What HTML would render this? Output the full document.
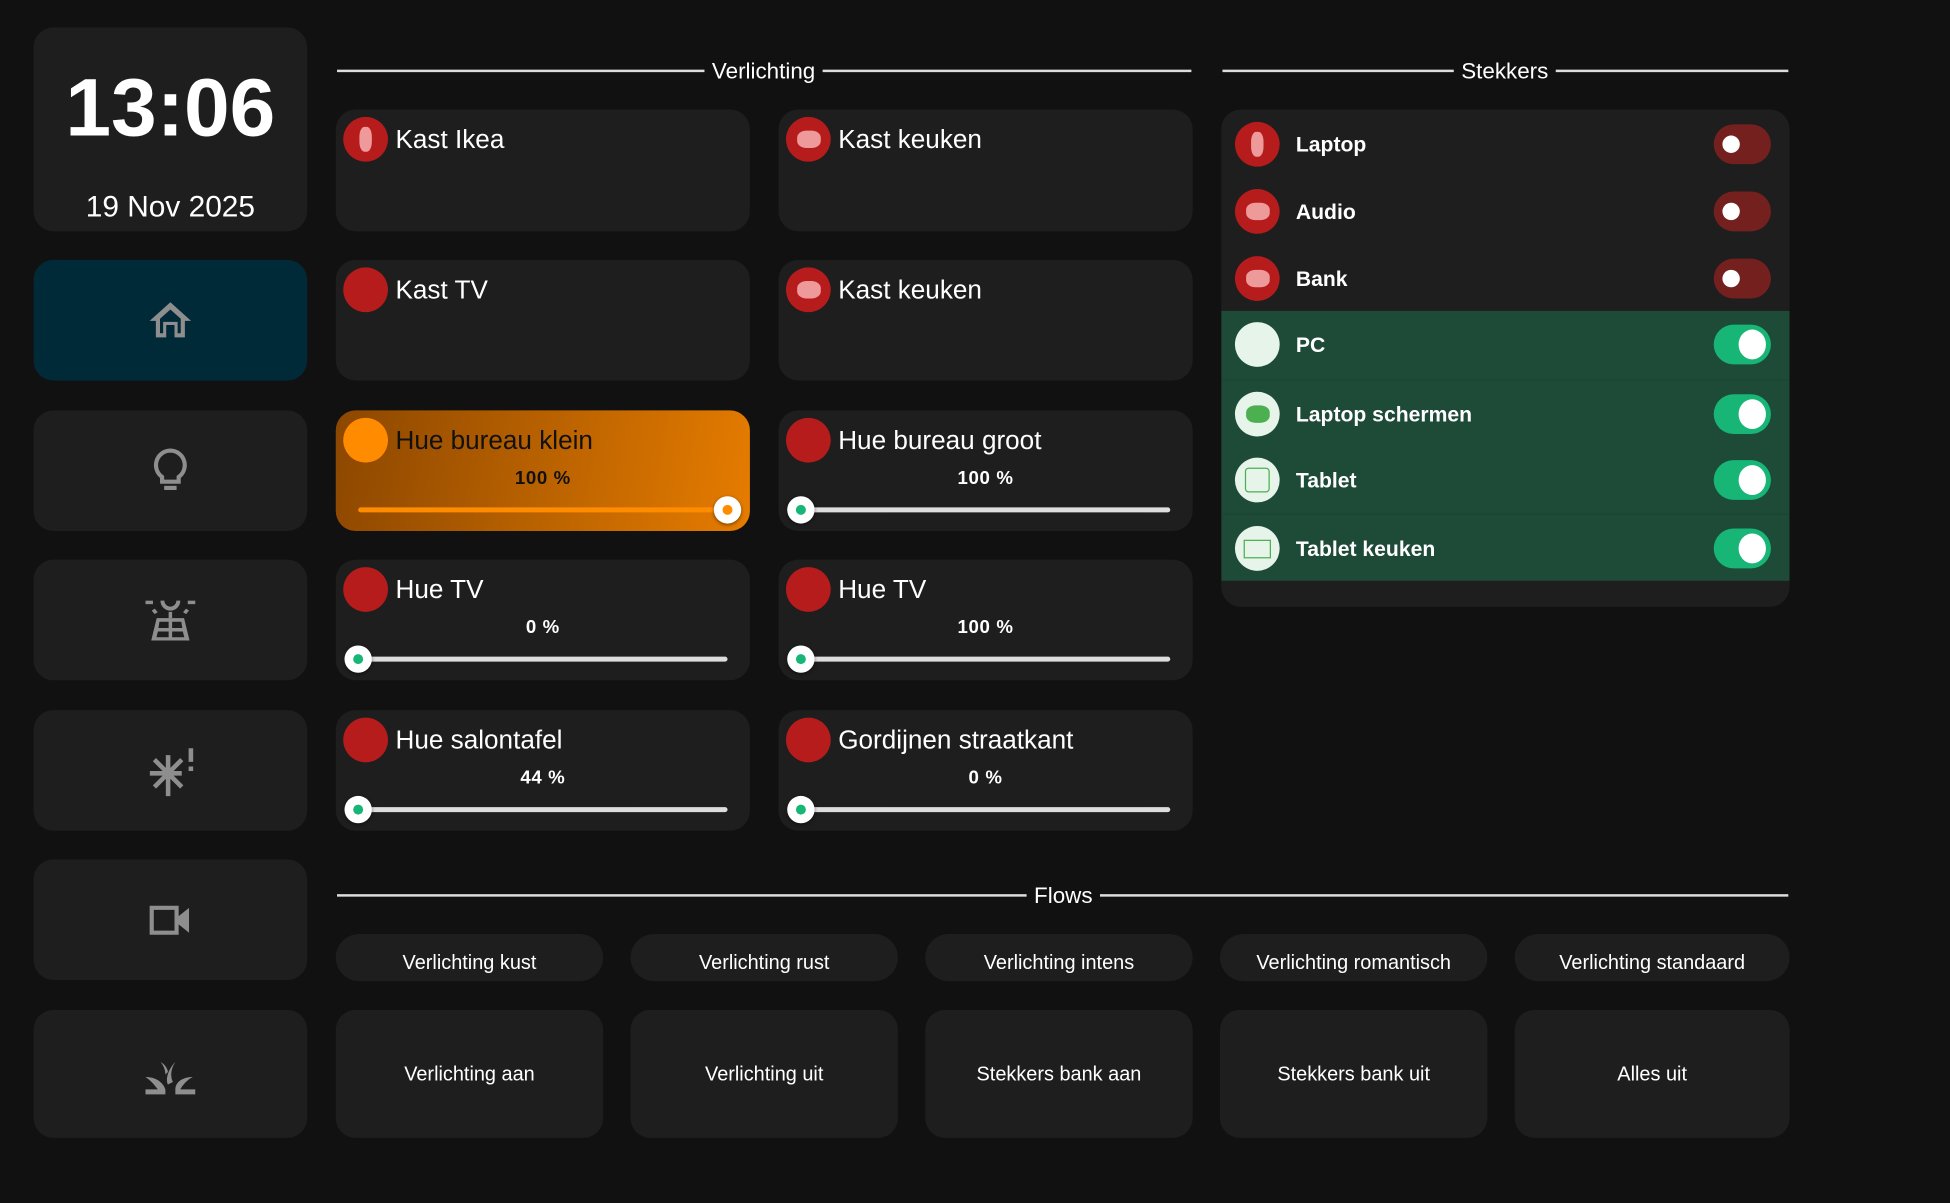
<!DOCTYPE html>
<html><head><meta charset="utf-8"><style>
*{box-sizing:border-box;margin:0;padding:0}
html,body{width:1950px;height:1203px;background:#111;overflow:hidden}
#w{position:absolute;left:0;top:0;width:1568px;height:967px;transform:scale(1.243622);transform-origin:0 0;font-family:"Liberation Sans",Roboto,sans-serif;color:#fff}
.c{position:absolute;background:#1e1e1e;border-radius:16px}
.nav{left:27px;width:220px;display:flex;align-items:center;justify-content:center}
.hdr{position:absolute;height:2px;background:#ddd}
.ht{position:absolute;font-size:18px;transform:translateX(-50%);background:#111;padding:0 6px;top:47px}
.ic{position:absolute;width:36px;height:36px;border-radius:50%;background:#b71c1c}
.lt{position:absolute;left:48px;top:13px;font-size:21px}
.pc{position:absolute;width:100%;text-align:center;top:46px;font-size:15px;font-weight:bold;letter-spacing:.5px}
.tr{position:absolute;left:18px;right:18px;top:78px;height:4px;background:#ddd;border-radius:2px}
.th{position:absolute;width:22px;height:22px;border-radius:50%;background:#fff;top:69px;box-shadow:0 1px 3px rgba(0,0,0,.5)}
.th::after{content:"";position:absolute;left:7px;top:7px;width:8px;height:8px;border-radius:50%;background:#17b576}
.th.o::after{background:#ff8c00}
.pk{position:absolute;background:#ef9a9a;border-radius:40%}
.row{position:absolute;left:0;right:0;height:54px}
.row .i{position:absolute;left:11px;top:9px;width:36px;height:36px;border-radius:50%;background:#b71c1c}
.row .n{position:absolute;left:60px;top:18px;font-size:17px;font-weight:bold}
.tg{position:absolute;left:396px;top:11px;width:46px;height:32px;border-radius:16px;background:#74201f}
.tg::after{content:"";position:absolute;left:7px;top:9px;width:14px;height:14px;border-radius:50%;background:#fff}
.on .i{background:#e6f4ea}
.on .tg{background:#17b576}
.on .tg::after{left:20px;top:4px;width:22px;height:24px;border-radius:50%}
.pill{position:absolute;top:751px;height:38px;border-radius:19px;background:#1e1e1e;display:flex;align-items:center;justify-content:center;font-size:16px;padding-top:9px}
.big{position:absolute;top:812px;height:103px;border-radius:16px;background:#1e1e1e;display:flex;align-items:center;justify-content:center;font-size:16px;padding-top:3px}
</style></head><body><div id="w">
<div class="c nav" style="top:22px;height:164px;flex-direction:column">
<div style="font-size:66px;font-weight:bold;margin-top:20px">13:06</div>
<div style="font-size:24px;margin-top:29px">19 Nov 2025</div></div>
<div class="c nav" style="top:209px;height:97px;background:#012a39"><svg width="40" height="40" viewBox="0 0 24 24"><path d="M12 3L2 12h3v8h5v-6h4v6h5v-8h3z M7 11v7h1.5v-5.5h7V18H17v-7l-5-4.5z" fill="#8e8e8e" fill-rule="evenodd"/></svg></div>
<div class="c nav" style="top:330px;height:97px"><svg width="40" height="40" viewBox="0 0 24 24"><path d="M12 2a7 7 0 0 0-4 12.7V17h8v-2.3A7 7 0 0 0 12 2z" fill="none" stroke="#8e8e8e" stroke-width="2"/><rect x="9" y="19" width="6" height="2" fill="#8e8e8e"/></svg></div>
<div class="c nav" style="top:450px;height:97px"><svg width="48" height="48" viewBox="0 0 24 24" fill="#8e8e8e"><rect x="2" y="4" width="3" height="1.4"/><rect x="19" y="4" width="3" height="1.4"/><path d="M8 4a4 4 0 0 0 8 0h-1.6a2.4 2.4 0 0 1-4.8 0z"/><rect x="11.3" y="8.5" width="1.4" height="2.5"/><path d="M4.5 8l1.2-.8 1.2 1.4-1.2.8zM19.5 8l-1.2-.8-1.2 1.4 1.2.8z"/><path d="M6.5 11h11l2.2 9H4.3zM7.6 12.5l-.4 2.5h4.1v-2.5zM12.7 12.5V15h4.1l-.4-2.5zM7 16.4l-.6 2.3h4.9v-2.3zM12.7 16.4v2.3h4.9l-.6-2.3z" fill-rule="evenodd"/></svg></div>
<div class="c nav" style="top:571px;height:97px"><svg width="44" height="44" viewBox="0 0 24 24" fill="none" stroke="#8e8e8e" stroke-width="2"><path d="M11 5v18M3 13h14M5 7l12 12M17 7L5 19"/><path d="M21 2v6M21 10v2" stroke-width="2"/></svg></div>
<div class="c nav" style="top:691px;height:97px"><svg width="40" height="40" viewBox="0 0 24 24" fill="#8e8e8e"><path d="M2 5h14v5l5-4v12l-5-4v5H2zM4 7v10h10V7z" fill-rule="evenodd"/></svg></div>
<div class="c nav" style="top:812px;height:103px"><svg width="48" height="48" viewBox="0 0 24 24" fill="#8e8e8e"><path d="M2 20h8v-2C9 15 6 13 2 13c3 2 4 4 5 5H2zM14 20h8v-2h-6c1-2 3-4 5-5-4 0-7 2-7 5zM11 16c-1-2 0-6 3-9-2 3-2 6-1 8zM10 12c0-2-1-4-2-5 2 1 3 3 3 4z"/></svg></div>

<div class="hdr" style="left:271px;width:687px;top:56px"></div><div class="ht" style="left:614px">Verlichting</div>
<div class="hdr" style="left:983px;width:455px;top:56px"></div><div class="ht" style="left:1210px">Stekkers</div>
<div class="hdr" style="left:271px;width:1167px;top:719px"></div><div class="ht" style="left:855px;top:710px">Flows</div>

<div class="c" style="left:270px;top:88px;width:333px;height:98px"><div class="ic" style="left:6px;top:6px"><div class="pk" style="left:13px;top:8px;width:10px;height:20px"></div></div><div class="lt">Kast Ikea</div></div>
<div class="c" style="left:626px;top:88px;width:333px;height:98px"><div class="ic" style="left:6px;top:6px"><div class="pk" style="left:9px;top:11px;width:19px;height:14px"></div></div><div class="lt">Kast keuken</div></div>
<div class="c" style="left:270px;top:209px;width:333px;height:97px"><div class="ic" style="left:6px;top:6px"></div><div class="lt">Kast TV</div></div>
<div class="c" style="left:626px;top:209px;width:333px;height:97px"><div class="ic" style="left:6px;top:6px"><div class="pk" style="left:9px;top:11px;width:19px;height:14px"></div></div><div class="lt">Kast keuken</div></div>

<div class="c" style="left:270px;top:330px;width:333px;height:97px;background:linear-gradient(100deg,#8c4700,#e67c00)"><div class="ic" style="left:6px;top:6px;background:#ff8c00"></div><div class="lt" style="color:#111">Hue bureau klein</div><div class="pc" style="color:#111">100 %</div><div class="tr" style="background:#ff8c00"></div><div class="th o" style="left:304px"></div></div>
<div class="c" style="left:626px;top:330px;width:333px;height:97px"><div class="ic" style="left:6px;top:6px"></div><div class="lt">Hue bureau groot</div><div class="pc">100 %</div><div class="tr"></div><div class="th" style="left:7px"></div></div>
<div class="c" style="left:270px;top:450px;width:333px;height:97px"><div class="ic" style="left:6px;top:6px"></div><div class="lt">Hue TV</div><div class="pc">0 %</div><div class="tr"></div><div class="th" style="left:7px"></div></div>
<div class="c" style="left:626px;top:450px;width:333px;height:97px"><div class="ic" style="left:6px;top:6px"></div><div class="lt">Hue TV</div><div class="pc">100 %</div><div class="tr"></div><div class="th" style="left:7px"></div></div>
<div class="c" style="left:270px;top:571px;width:333px;height:97px"><div class="ic" style="left:6px;top:6px"></div><div class="lt">Hue salontafel</div><div class="pc">44 %</div><div class="tr"></div><div class="th" style="left:7px"></div></div>
<div class="c" style="left:626px;top:571px;width:333px;height:97px"><div class="ic" style="left:6px;top:6px"></div><div class="lt">Gordijnen straatkant</div><div class="pc">0 %</div><div class="tr"></div><div class="th" style="left:7px"></div></div>

<div class="c" style="left:982px;top:88px;width:457px;height:400px;overflow:hidden">
<div class="row" style="top:1px"><div class="i"><div class="pk" style="left:13px;top:8px;width:10px;height:20px"></div></div><div class="n">Laptop</div><div class="tg"></div></div>
<div class="row" style="top:55px"><div class="i"><div class="pk" style="left:9px;top:11px;width:19px;height:14px"></div></div><div class="n">Audio</div><div class="tg"></div></div>
<div class="row" style="top:109px"><div class="i"><div class="pk" style="left:9px;top:11px;width:19px;height:14px"></div></div><div class="n">Bank</div><div class="tg"></div></div>
<div style="position:absolute;left:0;right:0;top:162px;height:217px;background:#1e4a38"></div>
<div class="row on" style="top:162px"><div class="i"></div><div class="n">PC</div><div class="tg"></div></div>
<div class="row on" style="top:217px;border-top:1px solid #1b4434"><div class="i"><div class="pk" style="left:9px;top:11px;width:19px;height:14px;background:#4caf50"></div></div><div class="n">Laptop schermen</div><div class="tg"></div></div>
<div class="row on" style="top:271px"><div class="i"><div style="position:absolute;left:8px;top:8px;width:20px;height:20px;border:1.5px solid #4caf50;border-radius:3px"></div></div><div class="n">Tablet</div><div class="tg"></div></div>
<div class="row on" style="top:325px;border-top:1px solid #1b4434"><div class="i"><div style="position:absolute;left:7px;top:11px;width:22px;height:15px;border:1.5px solid #4caf50"></div></div><div class="n">Tablet keuken</div><div class="tg"></div></div>
</div>

<div class="pill" style="left:270px;width:215px">Verlichting kust</div>
<div class="pill" style="left:507px;width:215px">Verlichting rust</div>
<div class="pill" style="left:744px;width:215px">Verlichting intens</div>
<div class="pill" style="left:981px;width:215px">Verlichting romantisch</div>
<div class="pill" style="left:1218px;width:221px">Verlichting standaard</div>
<div class="big" style="left:270px;width:215px">Verlichting aan</div>
<div class="big" style="left:507px;width:215px">Verlichting uit</div>
<div class="big" style="left:744px;width:215px">Stekkers bank aan</div>
<div class="big" style="left:981px;width:215px">Stekkers bank uit</div>
<div class="big" style="left:1218px;width:221px">Alles uit</div>
</div></body></html>
